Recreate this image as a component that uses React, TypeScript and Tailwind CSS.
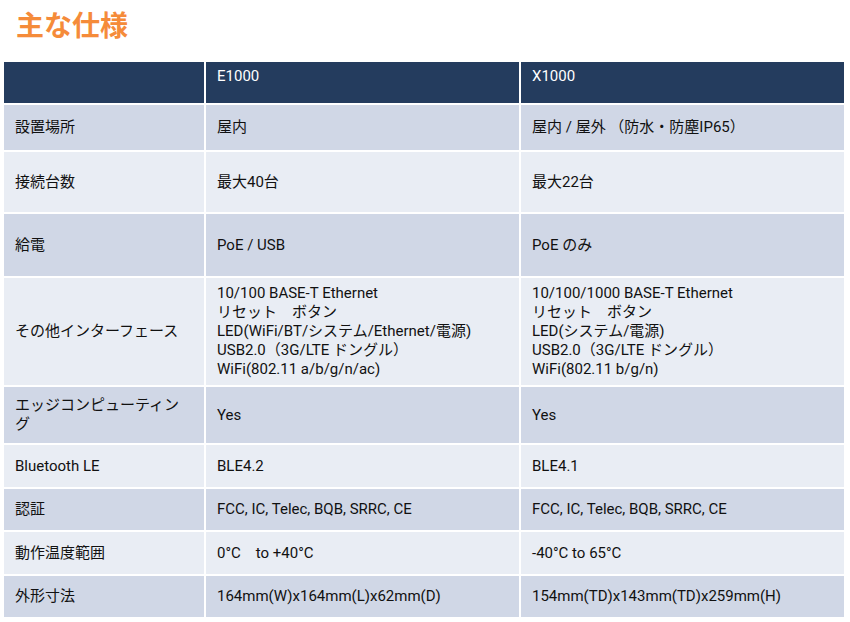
const rows: [string, string, string, string][] = [
  ["設置場所", "屋内", "屋内 / 屋外 （防水・防塵IP65）", "h-[45px]"],
  ["接続台数", "最大40台", "最大22台", "h-[60px]"],
  ["給電", "PoE / USB", "PoE のみ", "h-[62px]"],
  [
    "その他インターフェース",
    "10/100 BASE-T Ethernet\nリセット　ボタン\nLED(WiFi/BT/システム/Ethernet/電源)\nUSB2.0（3G/LTE ドングル）\nWiFi(802.11 a/b/g/n/ac)",
    "10/100/1000 BASE-T Ethernet\nリセット　ボタン\nLED(システム/電源)\nUSB2.0（3G/LTE ドングル）\nWiFi(802.11 b/g/n)",
    "h-[107px]",
  ],
  ["エッジコンピューティング", "Yes", "Yes", "h-[56px]"],
  ["Bluetooth LE", "BLE4.2", "BLE4.1", "h-[42px]"],
  ["認証", "FCC, IC, Telec, BQB, SRRC, CE", "FCC, IC, Telec, BQB, SRRC, CE", "h-[41px]"],
  ["動作温度範囲", "0°C　to +40°C", "-40°C to 65°C", "h-[42px]"],
  ["外形寸法", "164mm(W)x164mm(L)x62mm(D)", "154mm(TD)x143mm(TD)x259mm(H)", "h-[41px]"],
];

export default function App() {
  return (
    <div className="w-[850px] h-[622px] bg-white text-[15px] text-[#111]" style={{ fontFamily: "Roboto, 'Noto Sans CJK JP', sans-serif" }}>
      <h1 className="pl-[16px] pt-[6px] h-[62px] text-[28px] font-bold text-[#f58b3a]">主な仕様</h1>
      <div className="ml-[4px] w-[840px] grid grid-cols-[200px_313px_323px] gap-[2px]">
        <div className="h-[41px] bg-[#243c5e]" />
        <div className="h-[41px] bg-[#243c5e] text-white px-[11px] pt-[3px]">E1000</div>
        <div className="h-[41px] bg-[#243c5e] text-white px-[11px] pt-[3px]">X1000</div>
        {rows.map(([a, b, c, h], i) => {
          const bg = i % 2 === 0 ? "bg-[#d0d7e6]" : "bg-[#e9edf4]";
          return [a, b, c].map((t, j) => (
            <div key={i + "-" + j} className={`${h} ${bg} flex items-center px-[11px] leading-[19px] whitespace-pre-line`}>
              {t}
            </div>
          ));
        })}
      </div>
    </div>
  );
}
